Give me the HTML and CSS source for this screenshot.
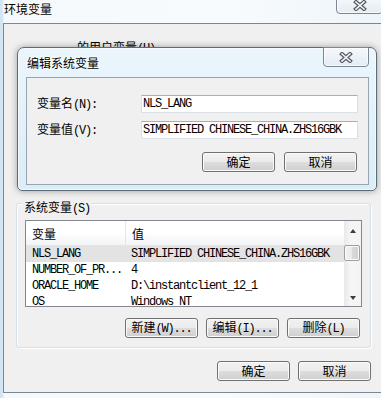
FILE: index.html
```html
<!DOCTYPE html>
<html lang="zh-CN">
<head>
<meta charset="utf-8">
<title>环境变量</title>
<link rel="stylesheet" href="styles.css">
</head>
<body>
<div class="screen">
  <div class="titlebar">
    <span class="title">环境变量</span>
    <div class="close-btn outer-close">
      <svg width="14" height="11" viewBox="0 0 14 11"><path d="M3 2 L11 9 M11 2 L3 9" stroke="#555c63" stroke-width="4" stroke-linecap="square"/><path d="M3 2 L11 9 M11 2 L3 9" stroke="#f6f6f6" stroke-width="1.6" stroke-linecap="square"/></svg>
    </div>
  </div>

  <div class="client">
    <div class="user-group">
      <div class="group-title user-title">的用户变量<span class="m">(U)</span></div>
    </div>

    <div class="group sys-group">
      <div class="group-title">系统变量<span class="m">(S)</span></div>
      <div class="listview">
        <div class="lv-main">
          <div class="lv-header">
            <div class="hc c1">变量</div>
            <div class="hc c2">值</div>
          </div>
          <div class="lv-row selected"><span class="rc c1 m">NLS_LANG</span><span class="rc c2 m">SIMPLIFIED CHINESE_CHINA.ZHS16GBK</span></div>
          <div class="lv-row"><span class="rc c1 m">NUMBER_OF_PR...</span><span class="rc c2 m">4</span></div>
          <div class="lv-row"><span class="rc c1 m">ORACLE_HOME</span><span class="rc c2 m">D:\instantclient_12_1</span></div>
          <div class="lv-row"><span class="rc c1 m">OS</span><span class="rc c2 m">Windows_NT</span></div>
        </div>
        <div class="scrollbar">
          <div class="sb-btn"><span class="arrow up"></span></div>
          <div class="sb-track"><div class="sb-thumb"></div></div>
          <div class="sb-btn"><span class="arrow down"></span></div>
        </div>
      </div>
      <div class="btn-row group-btns">
        <button class="btn">新建<span class="m">(W)...</span></button>
        <button class="btn">编辑<span class="m">(I)...</span></button>
        <button class="btn">删除<span class="m">(L)</span></button>
      </div>
    </div>

    <div class="btn-row bottom-btns">
      <button class="btn">确定</button>
      <button class="btn">取消</button>
    </div>
  </div>

  <div class="dialog">
    <div class="dlg-title">
      <span class="dlg-title-text">编辑系统变量</span>
      <div class="close-btn dlg-close">
        <svg width="14" height="11" viewBox="0 0 14 11"><path d="M3 2 L11 9 M11 2 L3 9" stroke="#555c63" stroke-width="4" stroke-linecap="square"/><path d="M3 2 L11 9 M11 2 L3 9" stroke="#f6f6f6" stroke-width="1.6" stroke-linecap="square"/></svg>
      </div>
    </div>
    <div class="dlg-client">
      <div class="form">
        <label class="lbl">变量名<span class="m">(N):</span></label>
        <div class="textbox m">NLS_LANG</div>
        <label class="lbl">变量值<span class="m">(V):</span></label>
        <div class="textbox m">SIMPLIFIED CHINESE_CHINA.ZHS16GBK</div>
      </div>
      <div class="btn-row dlg-btns">
        <button class="btn">确定</button>
        <button class="btn">取消</button>
      </div>
    </div>
  </div>
</div>
</body>
</html>
```

FILE: styles.css
```css
* { box-sizing: border-box; }
html, body { margin: 0; padding: 0; }
body {
  width: 381px;
  height: 398px;
  overflow: hidden;
  font-family: "Noto Sans CJK SC", sans-serif;
  font-size: 12px;
  color: #000;
}
.m {
  font-family: "Liberation Mono", "Noto Sans CJK SC", monospace;
  font-size: 12px;
  letter-spacing: -1.2px;
}
.screen {
  position: relative;
  width: 381px;
  height: 398px;
  overflow: hidden;
  background:
    linear-gradient(to bottom, rgba(255,255,255,0) 0, rgba(255,255,255,0) 392px, rgba(200,216,230,0.0) 392px),
    linear-gradient(to right, #cfe3f2 0, #d9e9f5 3px, #f5f9fc 4px, #f7fbfd 60%, #eef5fa 100%);
}
.titlebar {
  height: 23px;
  display: flex;
  align-items: flex-start;
  justify-content: space-between;
}
.title {
  margin: 1px 0 0 4px;
  line-height: 16px;
  text-shadow: 0 0 5px #fff, 0 0 3px #fff;
}
.close-btn {
  display: flex;
  align-items: center;
  justify-content: center;
  border: 1px solid #7b8791;
  border-radius: 0 0 4px 4px;
  background: linear-gradient(#f4f8fb, #e4edf3);
  box-shadow: inset 0 0 0 1px rgba(255,255,255,0.7);
}
.outer-close {
  flex-shrink: 0;
  width: 47px;
  height: 17px;
  margin: -3px -2px 0 0;
}
.client {
  margin-left: 3px;
  width: 380px;
  height: 370px;
  border: 1px solid #7d8791;
  border-right: none;
  background: #f0f0f0;
  padding-left: 12px;
}
.user-group {
  margin-top: 16px;
  height: 163px;
}
.group-title {
  width: fit-content;
  line-height: 14px;
  padding: 0 2px;
  background: #f0f0f0;
  white-space: nowrap;
}
.user-title {
  margin-left: 59px;
}
.sys-group {
  width: 355px;
  height: 145px;
  border: 1px solid #d5dfe5;
  border-radius: 3px;
  box-shadow: inset 1px 1px 0 #fff, 1px 1px 0 #fff;
}
.sys-group > .group-title {
  margin: -4px 0 0 5px;
}
.listview {
  margin: 4px 8px 0 8px;
  height: 87px;
  border: 1px solid #828790;
  background: #fff;
  display: flex;
  overflow: hidden;
}
.lv-main {
  flex: 1;
  overflow: hidden;
}
.lv-header {
  height: 25px;
  display: flex;
  border-bottom: 1px solid #e3e5e8;
  background: linear-gradient(#ffffff 0%, #ffffff 45%, #f3f4f6 100%);
}
.hc {
  display: flex;
  align-items: center;
  padding-left: 6px;
}
.hc.c1 {
  width: 100px;
  border-right: 1px solid #e3e5e8;
}
.lv-row {
  height: 16px;
  display: flex;
  align-items: center;
  white-space: nowrap;
}
.lv-row.selected {
  background: #e3e3e3;
}
.rc { padding-left: 6px; line-height: 16px; }
.rc.c1 { width: 99px; }
.scrollbar {
  width: 17px;
  display: flex;
  flex-direction: column;
  background: linear-gradient(to right, #e9e9e9, #f6f6f6 40%, #f4f4f4);
}
.sb-btn {
  height: 17px;
  display: flex;
  align-items: center;
  justify-content: center;
}
.arrow {
  width: 0;
  height: 0;
  border-left: 3.5px solid transparent;
  border-right: 3.5px solid transparent;
}
.arrow.up { border-bottom: 4px solid #3d3d3d; margin-top: 3px; }
.arrow.down { border-top: 4px solid #3d3d3d; margin-top: 1px; }
.sb-track {
  flex: 1;
  padding-top: 7px;
}
.sb-thumb {
  width: 16px;
  height: 16px;
  border: 1px solid #9b9fa6;
  border-radius: 2px;
  background: linear-gradient(to right, #f3f3f3, #e8e8e8 50%, #d9d9d9 51%, #d0d0d0);
  box-shadow: inset 0 0 0 1px #fafafa;
}
.btn-row {
  display: flex;
  justify-content: flex-end;
}
.btn {
  width: 73px;
  height: 20px;
  padding: 0;
  margin: 0;
  border: 1px solid #707070;
  border-radius: 3px;
  background: linear-gradient(#f2f2f2 0%, #ebebeb 50%, #dddddd 51%, #cfcfcf 100%);
  box-shadow: inset 0 0 0 1px #fbfbfb;
  font-family: "Noto Sans CJK SC", sans-serif;
  font-size: 12px;
  line-height: 16px;
  color: #000;
  white-space: nowrap;
}
.group-btns {
  margin-top: 11px;
  padding-right: 10px;
  gap: 8px;
}
.bottom-btns {
  margin-top: 13px;
  padding-right: 12px;
  gap: 8px;
}
.dialog {
  position: absolute;
  left: 17px;
  top: 47px;
  width: 360px;
  height: 144px;
  border: 1px solid #5d6a77;
  border-radius: 7px 7px 5px 5px;
  background: linear-gradient(#eaf6fc, #dbedf7);
  padding: 0 7px 5px 8px;
  box-shadow: 0 0 7px rgba(0,0,0,0.35), inset 0 0 0 1px rgba(255,255,255,0.6);
  display: flex;
  flex-direction: column;
}
.dlg-title {
  height: 29px;
  display: flex;
  align-items: flex-start;
}
.dlg-title-text {
  margin: 7px 0 0 1px;
  line-height: 16px;
  text-shadow: 0 0 5px #fff, 0 0 3px #fff;
}
.dlg-close {
  margin: -1px 0 0 auto;
  width: 46px;
  height: 20px;
}
.dlg-client {
  height: 108px;
  border: 1px solid #97a5b2;
  background: #f0f0f0;
  padding: 17px 11px 0 10px;
}
.form {
  display: grid;
  grid-template-columns: 104px 217px;
  row-gap: 8px;
  align-items: center;
}
.lbl {
  white-space: nowrap;
  line-height: 16px;
}
.textbox {
  height: 18px;
  border: 1px solid #dbdfe6;
  border-top-color: #abadb3;
  background: #fff;
  padding-left: 1px;
  line-height: 16px;
  white-space: nowrap;
  overflow: hidden;
}
.dlg-btns {
  margin-top: 13px;
  gap: 9px;
}
```
